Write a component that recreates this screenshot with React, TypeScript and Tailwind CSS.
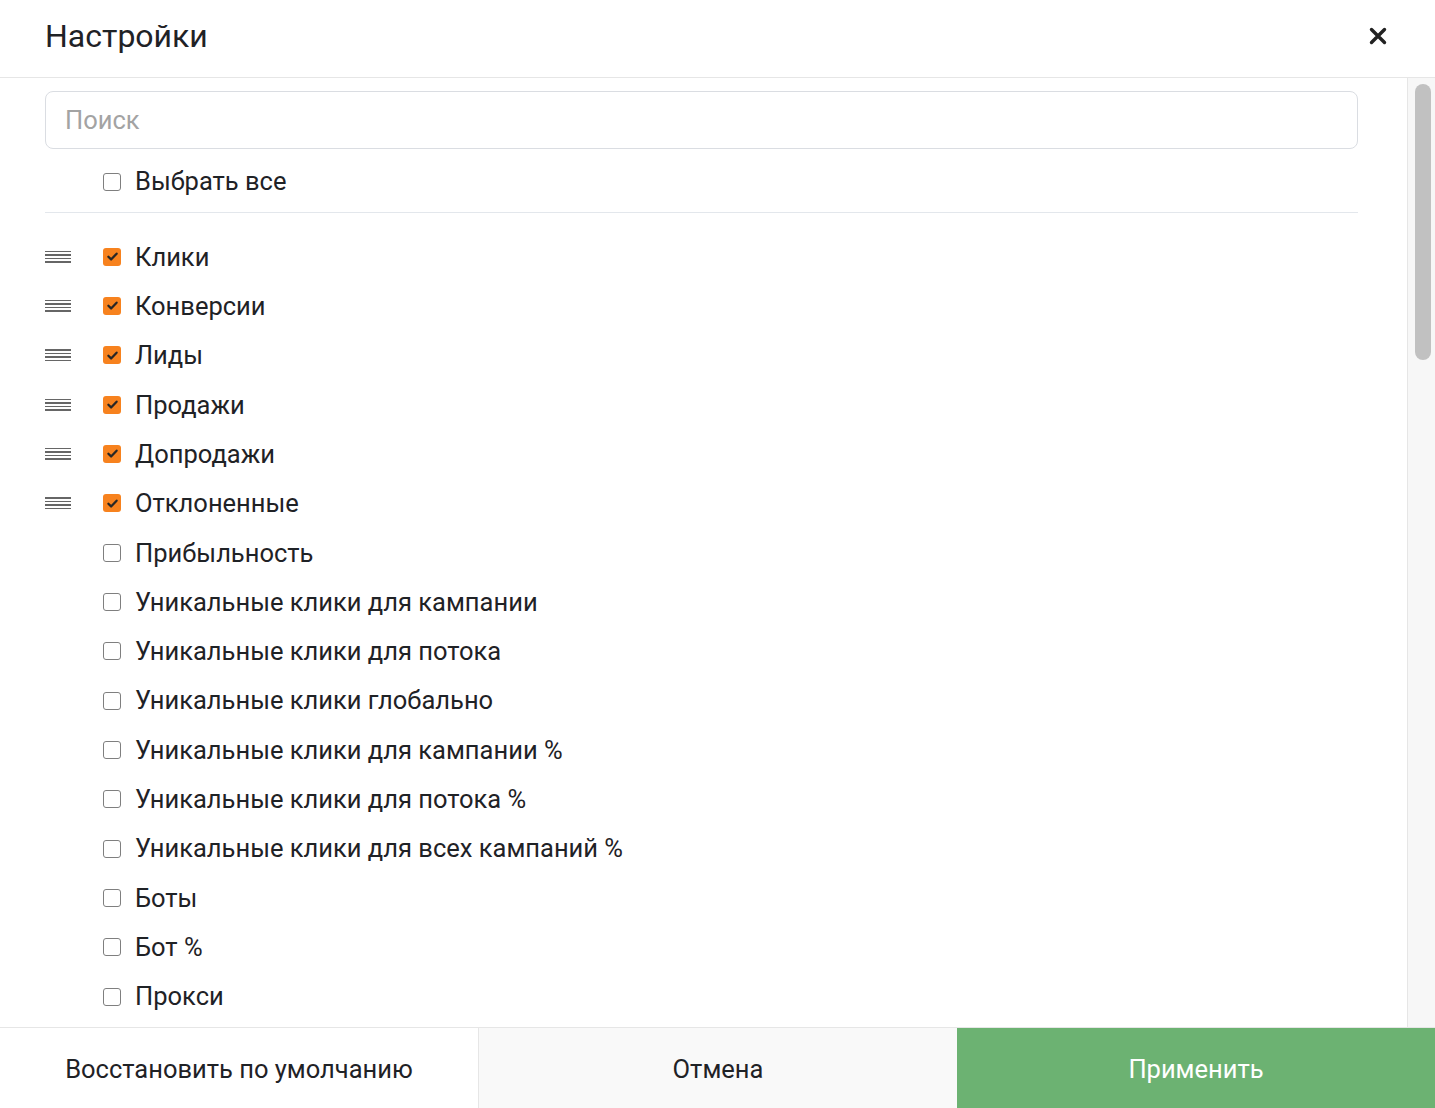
import { useState } from 'react';

const items: { label: string; checked: boolean }[] = [
  { label: 'Клики', checked: true },
  { label: 'Конверсии', checked: true },
  { label: 'Лиды', checked: true },
  { label: 'Продажи', checked: true },
  { label: 'Допродажи', checked: true },
  { label: 'Отклоненные', checked: true },
  { label: 'Прибыльность', checked: false },
  { label: 'Уникальные клики для кампании', checked: false },
  { label: 'Уникальные клики для потока', checked: false },
  { label: 'Уникальные клики глобально', checked: false },
  { label: 'Уникальные клики для кампании %', checked: false },
  { label: 'Уникальные клики для потока %', checked: false },
  { label: 'Уникальные клики для всех кампаний %', checked: false },
  { label: 'Боты', checked: false },
  { label: 'Бот %', checked: false },
  { label: 'Прокси', checked: false },
];

function Checkbox({ checked }: { checked: boolean }) {
  if (checked) {
    return (
      <span className="flex h-[18px] w-[18px] shrink-0 items-center justify-center rounded-[3px] bg-[#f7821e]">
        <svg width="13" height="13" viewBox="0 0 12 12" fill="none">
          <path d="M2.2 6.2l2.5 2.5L9.8 3.4" stroke="#262626" strokeWidth="2.1" strokeLinecap="round" strokeLinejoin="round" />
        </svg>
      </span>
    );
  }
  return <span className="h-[18px] w-[18px] shrink-0 rounded-[3px] border-[1.5px] border-[#7f7f7f] bg-white" />;
}

function Handle() {
  return (
    <div className="flex w-[26px] flex-col gap-[2px]">
      <span className="h-[1.5px] bg-[#666]" />
      <span className="h-[1.5px] bg-[#666]" />
      <span className="h-[1.5px] bg-[#666]" />
      <span className="h-[1.5px] bg-[#666]" />
    </div>
  );
}

export default function App() {
  const [query, setQuery] = useState('');

  return (
    <div className="flex h-[1108px] w-full flex-col overflow-hidden bg-white font-['Roboto',sans-serif] text-[#1f2226]">
      <div className="flex h-[78px] shrink-0 items-center justify-between border-b border-[#e6e6e6] pb-[5px] pl-[45px] pr-[48px]">
        <h1 className="text-[32px] leading-none">Настройки</h1>
        <svg width="18" height="18" viewBox="0 0 18 18">
          <path d="M2.5 2.5l13 13M15.5 2.5l-13 13" stroke="#222" strokeWidth="3.4" strokeLinecap="round" />
        </svg>
      </div>

      <div className="flex min-h-0 flex-1">
        <div className="min-w-0 flex-1 overflow-hidden pl-[45px] pr-[49px]">
          <input
            value={query}
            onChange={(e) => setQuery(e.target.value)}
            placeholder="Поиск"
            className="mt-[13px] h-[58px] w-full rounded-[8px] border border-[#dadde2] px-[19px] text-[25.5px] outline-none placeholder:text-[#a3a3a3]"
          />
          <label className="mt-[8px] flex h-[49px] items-center gap-[14px] pl-[58px] text-[25.5px]">
            <Checkbox checked={false} />
            <span>Выбрать все</span>
          </label>
          <div className="mt-[6px] h-px bg-[#e3e7ec]" />
          <div className="pt-[19px]">
            {items.map((it) => (
              <div key={it.label} className="flex h-[49.33px] items-center text-[25.5px]">
                <div className="w-[58px] shrink-0">{it.checked && <Handle />}</div>
                <Checkbox checked={it.checked} />
                <span className="ml-[14px] whitespace-nowrap">{it.label}</span>
              </div>
            ))}
          </div>
        </div>
        <div className="w-[28px] shrink-0 border-l border-[#e6e6e6] bg-[#f7f7f7] pl-[7px] pt-[6px]">
          <div className="h-[276px] w-[16px] rounded-full bg-[#c1c1c1]" />
        </div>
      </div>

      <div className="flex h-[81px] shrink-0 border-t border-[#e6e6e6] text-[25.5px]">
        <button className="flex-1 bg-white pt-[3px]">Восстановить по умолчанию</button>
        <button className="flex-1 border-l border-[#e6e6e6] bg-[#f9f9f9] pt-[3px]">Отмена</button>
        <button className="flex-1 bg-[#6cb272] pt-[3px] text-white">Применить</button>
      </div>
    </div>
  );
}
